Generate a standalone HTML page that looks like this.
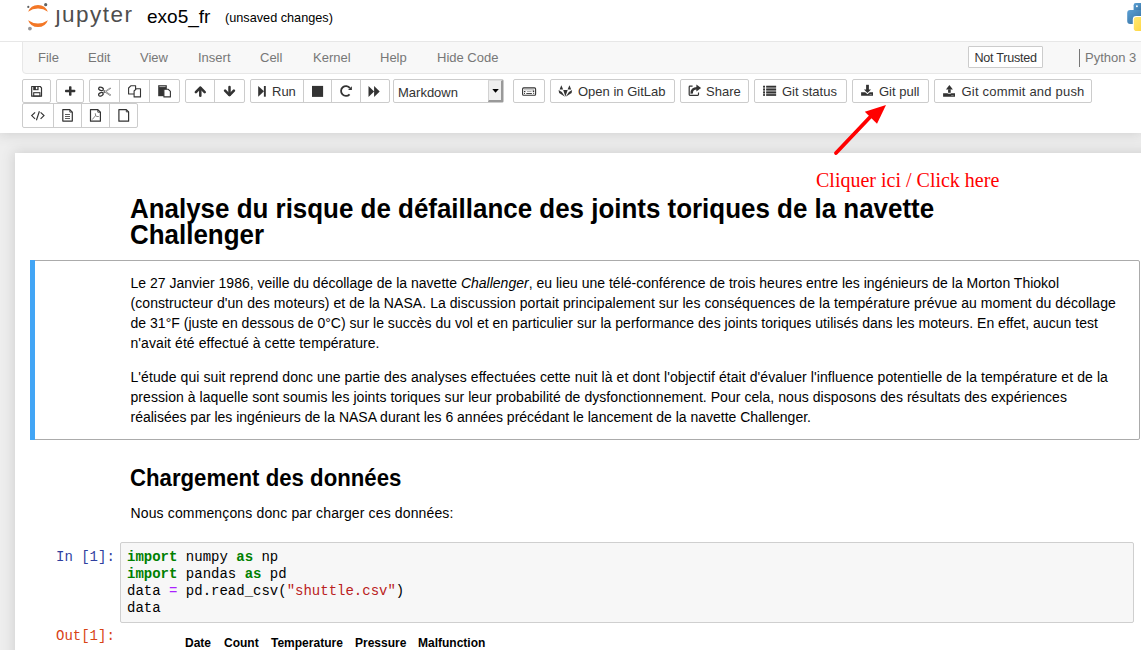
<!DOCTYPE html>
<html><head><meta charset="utf-8">
<style>
*{box-sizing:border-box}
html,body{margin:0;padding:0}
body{width:1141px;height:650px;overflow:hidden;position:relative;background:#eee;font-family:"Liberation Sans",sans-serif;color:#000}
.a{position:absolute}
.t{position:absolute;white-space:nowrap;line-height:1}
#hdr{left:0;top:0;width:1141px;height:133px;background:#fff;z-index:3;box-shadow:0 0 12px 1px rgba(87,87,87,.2)}
#nb{left:15px;top:153px;width:1200px;height:600px;background:#fff;box-shadow:0 0 12px 1px rgba(87,87,87,.2);z-index:1}
.menu{color:#777;font-size:13px}
.bg{position:absolute;top:79px;height:24px;border:1px solid #ccc;border-radius:2px;background:#fff}
.bg2{position:absolute;top:103px;height:25px;border:1px solid #ccc;border-radius:2px;background:#fff}
.sep{position:absolute;top:0;bottom:0;width:1px;background:#ccc}
.bt{color:#333;font-size:13px}
.p{font-size:14px;color:#000}
</style></head><body>
<div id="hdr" class="a">
  <!-- jupyter logo -->
  <svg class="a" style="left:24px;top:0px" width="30" height="32" viewBox="0 0 30 32">
    <path d="M4.1 11.8 A10.55 10.55 0 0 1 23.9 11.8 A16.9 16.9 0 0 0 4.1 11.8 Z" fill="#f37726"/>
    <path d="M4.1 20.2 A10.55 10.55 0 0 0 23.9 20.2 A16.9 16.9 0 0 1 4.1 20.2 Z" fill="#f37726"/>
    <circle cx="21.7" cy="4.7" r="1.6" fill="#616262"/>
    <circle cx="4.3" cy="6.9" r="1.1" fill="#616262"/>
    <circle cx="5.9" cy="28.6" r="1.9" fill="#989798"/>
  </svg>
  <div class="t" style="left:55.5px;top:4px;font-size:22.5px;color:#4e4e4e;letter-spacing:1.5px">ȷupyter</div>
  <div class="t" style="left:147px;top:7px;font-size:19px;color:#000">exo5_fr</div>
  <div class="t" style="left:225px;top:12px;font-size:12.7px;color:#000">(unsaved changes)</div>
  <!-- python logo -->
  <svg class="a" style="left:1120px;top:0" width="21" height="34" viewBox="1120 0 21 34">
    <defs>
      <linearGradient id="pb" x1="0" y1="0" x2="1" y2="1"><stop offset="0" stop-color="#5a9fd4"/><stop offset="1" stop-color="#306998"/></linearGradient>
      <linearGradient id="py" x1="0" y1="0" x2="1" y2="1"><stop offset="0" stop-color="#ffe873"/><stop offset="1" stop-color="#ffd43b"/></linearGradient>
    </defs>
    <rect x="1133.6" y="3" width="12" height="9" rx="2.2" fill="url(#pb)"/>
    <rect x="1127.2" y="10" width="18" height="14" rx="3" fill="url(#pb)"/>
    <circle cx="1136.9" cy="6.2" r="0.95" fill="#fff"/>
    <rect x="1132.8" y="16" width="14" height="16" rx="3.4" fill="#fff"/>
    <rect x="1133.8" y="16.9" width="12" height="14.2" rx="2.8" fill="url(#py)"/>
  </svg>
  <!-- line under header -->
  <div class="a" style="left:0;top:41px;width:1141px;height:1px;background:#e7e7e7"></div>
  <!-- menubar -->
  <div class="a" style="left:22px;top:41px;width:1130px;height:33px;background:#f8f8f8;border:1px solid #e7e7e7;border-radius:0 0 4px 4px"></div>
  <div class="t menu" style="left:38px;top:51px">File</div>
  <div class="t menu" style="left:88px;top:51px">Edit</div>
  <div class="t menu" style="left:140px;top:51px">View</div>
  <div class="t menu" style="left:198px;top:51px">Insert</div>
  <div class="t menu" style="left:260px;top:51px">Cell</div>
  <div class="t menu" style="left:313px;top:51px">Kernel</div>
  <div class="t menu" style="left:380px;top:51px">Help</div>
  <div class="t menu" style="left:437px;top:51px">Hide Code</div>
  <div class="a" style="left:968px;top:46px;width:75px;height:22px;border:1px solid #ccc;background:#fff;border-radius:1px"></div>
  <div class="t" style="left:974.5px;top:51.5px;font-size:12.6px;color:#333;letter-spacing:-0.25px">Not Trusted</div>
  <div class="a" style="left:1079px;top:49px;width:1px;height:18px;background:#777"></div>
  <div class="t menu" style="left:1085px;top:51px">Python 3</div>

  <!-- toolbar row 1 -->
  <div class="bg" style="left:22px;width:29px"></div>
  <div class="bg" style="left:56px;width:28px"></div>
  <div class="bg" style="left:89px;width:91px"><div class="sep" style="left:29px"></div><div class="sep" style="left:59px"></div></div>
  <div class="bg" style="left:185px;width:60px"><div class="sep" style="left:28px"></div></div>
  <div class="bg" style="left:250px;width:140px"><div class="sep" style="left:52px"></div><div class="sep" style="left:80px"></div><div class="sep" style="left:109px"></div></div>
  <div class="bg" style="left:393px;width:111px"></div>
  <div class="a" style="left:488px;top:80px;width:15px;height:22px;background:#efefef;border-left:1px solid #d2d2d2;border-top:1px solid #dedede;border-right:2px solid #999;border-bottom:2px solid #999"></div>
  <div class="bg" style="left:513px;width:32px"></div>
  <div class="bg" style="left:550px;width:125px"></div>
  <div class="bg" style="left:680px;width:69px"></div>
  <div class="bg" style="left:754px;width:93px"></div>
  <div class="bg" style="left:852px;width:77px"></div>
  <div class="bg" style="left:934px;width:158px"></div>
  <!-- row 2 -->
  <div class="bg2" style="left:22px;width:116px"><div class="sep" style="left:30px"></div><div class="sep" style="left:58px"></div><div class="sep" style="left:86px"></div></div>

  <div class="t bt" style="left:272px;top:85px">Run</div>
  <div class="t" style="left:398px;top:86px;font-size:13px;color:#333">Markdown</div>
  <div class="t bt" style="left:578px;top:85px">Open in GitLab</div>
  <div class="t bt" style="left:706px;top:85px">Share</div>
  <div class="t bt" style="left:782px;top:85px">Git status</div>
  <div class="t bt" style="left:879px;top:85px">Git pull</div>
  <div class="t bt" style="left:961.5px;top:85px;letter-spacing:0.2px">Git commit and push</div>
</div>

<svg class="a" style="left:0;top:0;z-index:5" width="1141" height="135" viewBox="0 0 1141 135">
<g fill="#333" stroke="none">
  <!-- save -->
  <path d="M31.7 86.5 H40.2 L41.5 87.8 V96.2 H31.7 Z" fill="none" stroke="#333" stroke-width="1.2" stroke-linejoin="round"/>
  <rect x="33.2" y="86.3" width="5.4" height="3.9"/>
  <rect x="35.9" y="86.9" width="1.4" height="2.3" fill="#fff"/>
  <rect x="33.7" y="92.7" width="6.2" height="3.4" fill="none" stroke="#333" stroke-width="1.1"/>
  <!-- plus -->
  <rect x="65" y="89.7" width="10.3" height="2.5" rx="0.8"/>
  <rect x="69" y="86.2" width="2.5" height="9.6" rx="0.8"/>
  <!-- scissors -->
  <g fill="none" stroke="#333" stroke-width="1.2">
    <ellipse cx="101" cy="88.9" rx="2.4" ry="1.6" transform="rotate(18 101 88.9)"/>
    <ellipse cx="100.9" cy="94.3" rx="2.4" ry="1.6" transform="rotate(-28 100.9 94.3)"/>
    <path d="M103.4 90.3 L110.6 95.3 M103.4 93 L110.6 88" stroke="#6a6a6a" stroke-width="1.5"/>
    <path d="M105 91.4 L110.2 95 M105 91.9 L110.2 88.3" stroke="#fff" stroke-width="0.5"/>
  </g>
  <!-- copy -->
  <g fill="#fff" stroke="#333" stroke-width="1.1" stroke-linejoin="round">
    <path d="M128.6 88 L130.8 85.8 H135.6 V94 H128.6 Z"/>
    <path d="M134.1 91 L136.3 88.8 H140.5 V96.9 H134.1 Z"/>
  </g>
  <!-- paste -->
  <rect x="158.2" y="85.2" width="8.6" height="11"/>
  <rect x="159.4" y="86.2" width="6.2" height="0.9" fill="#bbb"/>
  <path d="M163.9 89.3 H168.3 L170.4 91.4 V96.9 H163.9 Z" fill="#fff" stroke="#333" stroke-width="1.1" stroke-linejoin="round"/>
  <!-- up -->
  <path d="M195.9 92.1 L200.3 87.6 L204.7 92.1" fill="none" stroke="#333" stroke-width="2.6" stroke-linecap="round" stroke-linejoin="round"/>
  <path d="M200.3 88 V95.8" fill="none" stroke="#333" stroke-width="2.5" stroke-linecap="round"/>
  <!-- down -->
  <path d="M225.1 90.6 L229.5 95.1 L233.9 90.6" fill="none" stroke="#333" stroke-width="2.6" stroke-linecap="round" stroke-linejoin="round"/>
  <path d="M229.5 87 V94.8" fill="none" stroke="#333" stroke-width="2.5" stroke-linecap="round"/>
  <!-- run -->
  <path d="M258.2 86 L264 91.35 L258.2 96.7 Z"/>
  <rect x="263.9" y="86" width="1.9" height="10.7"/>
  <!-- stop -->
  <rect x="312" y="85.9" width="11.1" height="11"/>
  <!-- repeat -->
  <path d="M349.9 88.1 A4.9 4.9 0 1 0 349.6 94.3" fill="none" stroke="#333" stroke-width="1.8"/>
  <path d="M351.9 86.2 V90.1 H348 Z"/>
  <!-- forward -->
  <path d="M368.5 85.9 L374.1 91.4 L368.5 96.9 Z M374.1 85.9 L379.7 91.4 L374.1 96.9 Z"/>
  <!-- select arrow -->
  <path d="M492.3 89 H498.8 L495.55 92.7 Z" fill="#000"/>
  <!-- keyboard -->
  <rect x="522.6" y="87.9" width="13" height="7.3" rx="1" fill="none" stroke="#333" stroke-width="1.1"/>
  <rect x="524" y="89.2" width="10.2" height="1.2" fill="#bbb"/>
  <rect x="524" y="91" width="1.4" height="1.2"/>
  <rect x="532.8" y="90.5" width="1.4" height="1.7"/>
  <rect x="527" y="91.2" width="4.5" height="0.8" fill="#999"/>
  <rect x="526.3" y="93" width="5.6" height="0.9"/>
  <rect x="524" y="93" width="1" height="0.9"/>
  <rect x="533.2" y="93" width="1" height="0.9"/>
  <!-- gitlab -->
  <path d="M561.3 85.3 L563.2 89.6 H559.6 Z"/>
  <path d="M569.5 85.3 L571.2 89.6 H567.6 Z"/>
  <path d="M563.2 90 H567.7 L565.4 96.6 Z"/>
  <path d="M558.6 90.1 L561.8 91.9 L565 96.8 L559.1 92.9 Z"/>
  <path d="M572.1 90.1 L568.9 91.9 L565.7 96.8 L571.6 92.9 Z"/>
  <!-- share -->
  <path d="M692.6 86.2 H690 Q689.2 86.2 689.2 87 V94.5 Q689.2 95.3 690 95.3 H697.7 Q698.5 95.3 698.5 94.5 V92.4" fill="none" stroke="#333" stroke-width="1.2"/>
  <path d="M691.7 93.6 Q691.3 88.2 697.2 88.2" fill="none" stroke="#333" stroke-width="2.5"/>
  <path d="M696.4 84.6 L701.1 88.1 L696.4 91.4 Z"/>
  <!-- list -->
  <rect x="763.1" y="85.8" width="1.9" height="10" fill="#aaa"/>
  <rect x="766.2" y="85.8" width="9.9" height="10" fill="#aaa"/>
  <rect x="763.1" y="85.8" width="1.9" height="1.6"/><rect x="766.2" y="85.8" width="9.9" height="1.6"/>
  <rect x="763.1" y="88.7" width="1.9" height="1.6"/><rect x="766.2" y="88.7" width="9.9" height="1.6"/>
  <rect x="763.1" y="91.6" width="1.9" height="1.6"/><rect x="766.2" y="91.6" width="9.9" height="1.6"/>
  <rect x="763.1" y="94.2" width="1.9" height="1.6"/><rect x="766.2" y="94.2" width="9.9" height="1.6"/>
  <!-- download -->
  <rect x="866.1" y="84.8" width="2.8" height="5.5"/>
  <path d="M863.9 89.6 H871.1 L867.5 93.1 Z"/>
  <path d="M861.1 92.2 H865.2 L867.5 94.3 L869.8 92.2 H873 V95.7 H861.1 Z"/>
  <rect x="869.5" y="94.2" width="2.2" height="0.6" fill="#aaa"/>
  <!-- upload -->
  <path d="M945.9 89.6 L949.4 85 L952.9 89.6 Z"/>
  <rect x="948.1" y="89.3" width="2.6" height="3.5"/>
  <path d="M943.1 93.2 H947.4 Q949.4 94.4 951.4 93.2 H955 V96.8 H943.1 Z"/>
  <rect x="951.2" y="95.2" width="2.4" height="0.6" fill="#aaa"/>
  <!-- code -->
  <path d="M35.1 112.3 L31.7 115.6 L35.1 118.9 M40.6 112.3 L44 115.6 L40.6 118.9 M36.4 120.3 L39.4 111.2" fill="none" stroke="#333" stroke-width="1.15"/>
  <!-- file-text -->
  <path d="M62.8 109.6 H69.8 L72.3 112.1 V121.1 H62.8 Z" fill="none" stroke="#333" stroke-width="1.2" stroke-linejoin="round"/>
  <path d="M69.8 109.8 V112.1 H72.1" fill="none" stroke="#333" stroke-width="0.9"/>
  <rect x="65" y="114.1" width="5" height="0.8"/><rect x="65" y="116.1" width="5" height="0.8"/><rect x="65" y="118.1" width="5" height="0.8"/>
  <!-- pdf -->
  <path d="M90.5 109.6 H97.8 L100.4 112.2 V121.2 H90.5 Z" fill="none" stroke="#333" stroke-width="1.2" stroke-linejoin="round"/>
  <path d="M97.8 109.8 V112.2 H100.2" fill="none" stroke="#333" stroke-width="0.9"/>
  <path d="M95.3 113.3 L95.6 115.6 L92.2 119.6 M95.6 115.6 L96.8 116.5 H98.8" fill="none" stroke="#333" stroke-width="0.6"/>
  <!-- file-o -->
  <path d="M118.9 109.6 H126.3 L128.6 111.9 V121.2 H118.9 Z" fill="none" stroke="#333" stroke-width="1.2" stroke-linejoin="round"/>
  <path d="M126.3 109.8 V111.9 H128.4" fill="none" stroke="#333" stroke-width="0.9"/>
</g>
</svg>

<div id="nb" class="a"></div>

<!-- notebook content -->
<div class="a" style="left:0;top:0;width:1141px;height:650px;z-index:2">
  <div class="t" style="left:130px;top:195px;font-size:27.5px;font-weight:bold;transform:scaleX(0.943);transform-origin:0 0">Analyse du risque de défaillance des joints toriques de la navette</div>
  <div class="t" style="left:130px;top:221px;font-size:27.5px;font-weight:bold;transform:scaleX(0.943);transform-origin:0 0">Challenger</div>

  <div class="a" style="left:30px;top:260px;width:1110px;height:180px;border:1px solid #ababab;border-radius:2px"></div>
  <div class="a" style="left:30px;top:260px;width:5px;height:180px;background:#42a5f5"></div>
  <div class="t p" style="left:130.5px;top:276px;letter-spacing:0.007px">Le 27 Janvier 1986, veille du décollage de la navette <i>Challenger</i>, eu lieu une télé-conférence de trois heures entre les ingénieurs de la Morton Thiokol</div>
  <div class="t p" style="left:130.5px;top:296px;letter-spacing:0.06px">(constructeur d'un des moteurs) et de la NASA. La discussion portait principalement sur les conséquences de la température prévue au moment du décollage</div>
  <div class="t p" style="left:130.5px;top:316px;letter-spacing:0.025px">de 31°F (juste en dessous de 0°C) sur le succès du vol et en particulier sur la performance des joints toriques utilisés dans les moteurs. En effet, aucun test</div>
  <div class="t p" style="left:130.5px;top:336px;letter-spacing:0.075px">n'avait été effectué à cette température.</div>
  <div class="t p" style="left:130.5px;top:370px;letter-spacing:0.083px">L'étude qui suit reprend donc une partie des analyses effectuées cette nuit là et dont l'objectif était d'évaluer l'influence potentielle de la température et de la</div>
  <div class="t p" style="left:130.5px;top:390px;letter-spacing:0.054px">pression à laquelle sont soumis les joints toriques sur leur probabilité de dysfonctionnement. Pour cela, nous disposons des résultats des expériences</div>
  <div class="t p" style="left:130.5px;top:410px;letter-spacing:-0.005px">réalisées par les ingénieurs de la NASA durant les 6 années précédant le lancement de la navette Challenger.</div>

  <div class="t" style="left:130px;top:467px;font-size:23px;font-weight:bold;transform:scaleX(0.965);transform-origin:0 0">Chargement des données</div>
  <div class="t p" style="left:130.5px;top:506.2px;letter-spacing:0.14px">Nous commençons donc par charger ces données:</div>

  <div class="t" style="left:56px;top:549.5px;font-family:'Liberation Mono',monospace;font-size:14px;color:#303f9f">In [1]:</div>
  <div class="a" style="left:120px;top:542px;width:1014px;height:81px;background:#f7f7f7;border:1px solid #cfcfcf;border-radius:2px"></div>
  <div class="a" style="left:127px;top:548.5px;font-family:'Liberation Mono',monospace;font-size:14px;line-height:17px;white-space:pre;color:#000"><span style="color:#008000;font-weight:bold">import</span> numpy <span style="color:#008000;font-weight:bold">as</span> np
<span style="color:#008000;font-weight:bold">import</span> pandas <span style="color:#008000;font-weight:bold">as</span> pd
data <span style="color:#aa22ff">=</span> pd.read_csv(<span style="color:#ba2121">"shuttle.csv"</span>)
data</div>
  <div class="t" style="left:56px;top:629px;font-family:'Liberation Mono',monospace;font-size:14px;color:#d84315">Out[1]:</div>
  <div class="t" style="left:185px;top:637px;font-size:12px;font-weight:bold">Date</div>
  <div class="t" style="left:224px;top:637px;font-size:12px;font-weight:bold">Count</div>
  <div class="t" style="left:271px;top:637px;font-size:12px;font-weight:bold">Temperature</div>
  <div class="t" style="left:355px;top:637px;font-size:12px;font-weight:bold">Pressure</div>
  <div class="t" style="left:418px;top:637px;font-size:12px;font-weight:bold">Malfunction</div>
</div>

<!-- annotation -->
<svg class="a" style="left:0;top:0;z-index:10" width="1141" height="650">
  <line x1="836" y1="153" x2="873" y2="114" stroke="#ff0000" stroke-width="3.8" stroke-linecap="round"/>
  <polygon points="886,105 864.8,111.8 877,123.8" fill="#ff0000"/>
</svg>
<div class="t" style="left:816px;top:170px;z-index:10;font-family:'Liberation Serif',serif;font-size:20px;color:#ff0000">Cliquer ici / Click here</div>
</body></html>
